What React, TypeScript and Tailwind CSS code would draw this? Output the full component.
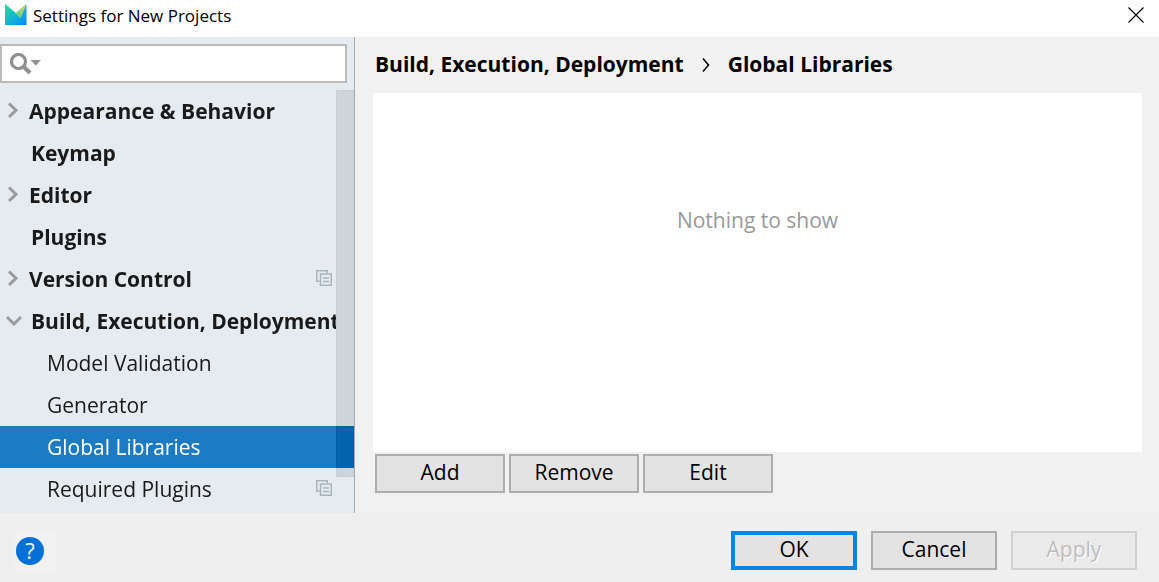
import { useState } from 'react'
import clsx from 'clsx'

interface TreeItem {
  label: string
  level: 0 | 1
  state?: 'open' | 'closed'
  perProject?: boolean
}

const ITEMS: TreeItem[] = [
  { label: 'Appearance & Behavior', level: 0, state: 'closed' },
  { label: 'Keymap', level: 0 },
  { label: 'Editor', level: 0, state: 'closed' },
  { label: 'Plugins', level: 0 },
  { label: 'Version Control', level: 0, state: 'closed', perProject: true },
  { label: 'Build, Execution, Deployment', level: 0, state: 'open' },
  { label: 'Model Validation', level: 1 },
  { label: 'Generator', level: 1 },
  { label: 'Global Libraries', level: 1 },
  { label: 'Required Plugins', level: 1, perProject: true },
]

function AppLogo() {
  return (
    <svg width="22" height="21" viewBox="0 0 22 21" aria-hidden="true">
      <defs>
        <linearGradient id="logo-base" x1="0" y1="0" x2="1" y2="1">
          <stop offset="0" stopColor="#1fe08c" />
          <stop offset="0.5" stopColor="#12b8d0" />
          <stop offset="1" stopColor="#0a84ff" />
        </linearGradient>
        <linearGradient id="logo-fold" x1="1" y1="0" x2="0.3" y2="1">
          <stop offset="0" stopColor="#f7d548" />
          <stop offset="1" stopColor="#5fd08c" />
        </linearGradient>
      </defs>
      <path d="M0 0 L11 9 L21.500 0 V21 H0 Z" fill="url(#logo-base)" />
      <path d="M21.500 0 L10.500 9.500 L15.500 14.500 Z" fill="url(#logo-fold)" />
    </svg>
  )
}

function Chevron({ state }: { state: 'open' | 'closed' }) {
  return (
    <svg width="18" height="18" viewBox="0 0 18 18" fill="none" stroke="#999b9d" strokeWidth="3" aria-hidden="true">
      {state === 'open' ? <path d="M3 5 L10 12 L17 5" /> : <path d="M5 1.500 L12 8.250 L5 15" />}
    </svg>
  )
}

function ProjectIcon() {
  return (
    <svg width="16" height="18" viewBox="0 0 16 18" fill="none" stroke="#a9b5bd" strokeWidth="1.500" aria-hidden="true">
      <path d="M3.500 11.250 H0.750 V0.750 H11.250 V3" />
      <rect x="4.500" y="4" width="10.750" height="11.250" />
      <path d="M7 8 H13 M7 11.500 H13" />
    </svg>
  )
}

function SearchBox() {
  return (
    <div className="mr-[7px] flex h-[39px] items-center border-2 border-[#b9bbbd] bg-white pl-2">
      <label htmlFor="settings-search" className="shrink-0">
        <svg width="32" height="22" viewBox="0 0 32 22" fill="none" role="img" aria-label="Search settings">
          <circle cx="8.500" cy="8.500" r="7" stroke="#8f9091" strokeWidth="3.200" />
          <path d="M13.500 13.500 L20 20" stroke="#8f9091" strokeWidth="4" />
          <path d="M20.500 7 H31 L25.750 12.500 Z" fill="#8f9091" />
        </svg>
      </label>
      <input id="settings-search" type="text" className="min-w-0 flex-1 px-1 text-[21px] outline-none" />
    </div>
  )
}

function PushButton({ label, className, disabled }: { label: string; className: string; disabled?: boolean }) {
  return (
    <button
      type="button"
      disabled={disabled}
      className={clsx('flex h-[39px] items-center justify-center pb-1 text-[21px] leading-7', className)}
    >
      {label}
    </button>
  )
}

export default function App() {
  const [selected, setSelected] = useState('Global Libraries')

  return (
    <div className="flex min-h-screen flex-col bg-[#efefef] font-['Open_Sans','Noto_Sans',sans-serif] text-black">
      <header className="flex h-[37px] items-center justify-between bg-white pr-[15px] pb-2 pl-[5px]">
        <div className="flex items-center gap-[6px]">
          <AppLogo />
          <h1 className="pt-[2px] text-[17px] leading-6">Settings for New Projects</h1>
        </div>
        <button type="button" aria-label="Close">
          <svg width="16" height="16" viewBox="0 0 16 16" stroke="#000" strokeWidth="1.200" aria-hidden="true">
            <path d="M0.500 0.500 L15.500 15.500 M15.500 0.500 L0.500 15.500" />
          </svg>
        </button>
      </header>

      <div className="flex flex-1">
        <aside className="w-[355px] shrink-0 border-r border-[#a8aaac] bg-[#e6ebef] pt-[7px]">
          <SearchBox />
          <nav className="relative isolate mt-[7px] bg-[#e6ebef] pb-[3px]">
            <ul>
              {ITEMS.map((item) => (
                <li key={item.label}>
                  <button
                    type="button"
                    onClick={() => setSelected(item.label)}
                    className={clsx(
                      'flex h-[42px] w-full items-center text-left text-[21px]',
                      item.level === 0 ? 'pl-1 font-bold' : 'pl-[47px]',
                      item.perProject ? 'pr-[22px]' : 'pr-[18px]',
                      item.label === selected ? 'bg-[#1b7bc3] text-white' : 'text-[#1a1a1a]',
                    )}
                  >
                    {item.level === 0 && (
                      <span className={clsx('flex shrink-0', item.state === 'closed' ? 'w-[25px]' : 'w-[27px]')}>
                        {item.state && <Chevron state={item.state} />}
                      </span>
                    )}
                    <span className="min-w-0 flex-1 overflow-hidden pt-[2px] whitespace-nowrap">{item.label}</span>
                    {item.perProject && <ProjectIcon />}
                  </button>
                </li>
              ))}
            </ul>
            {/* scroll thumb, darkens whatever row is below it */}
            <div className="pointer-events-none absolute top-0 right-0 bottom-9 w-[18px] border border-[#1c1c1c] bg-[#171717] mix-blend-difference" />
          </nav>
        </aside>

        <main className="flex min-w-0 flex-1 flex-col bg-[#f1f1f1] pr-[17px] pb-5 pl-[18px]">
          <h2 className="flex h-14 items-center px-[2px] text-[21px] font-bold">
            <span>Build, Execution, Deployment</span>
            <svg width="8" height="16" viewBox="0 0 8 16" fill="none" stroke="#000" strokeWidth="1.500" className="mx-[18px]" aria-hidden="true">
              <path d="M1 1.500 L6.500 8 L1 14.500" />
            </svg>
            <span>Global Libraries</span>
          </h2>
          <section className="flex-1 bg-white pt-28 text-center text-[21px] leading-[30px] text-[#999999]">
            Nothing to show
          </section>
          <div className="mt-[2px] flex gap-1 px-[2px]">
            {['Add', 'Remove', 'Edit'].map((label) => (
              <PushButton key={label} label={label} className="w-[130px] border-2 border-[#adadad] bg-[#e3e3e3]" />
            ))}
          </div>
        </main>
      </div>

      <footer className="flex h-[69px] items-center justify-between pt-[6px] pr-[22px] pl-[14px]">
        <button type="button" aria-label="Help" className="flex size-[42px] items-center bg-[#f1f1f1] pl-[2px]">
          <span className="flex size-7 items-center justify-center rounded-full bg-[#0270d7] text-[22px] text-white">?</span>
        </button>
        <div className="flex gap-[14px]">
          <PushButton label="OK" className="w-[126px] border-4 border-[#0a84e0] bg-[#e3e3e3]" />
          <PushButton label="Cancel" className="w-[126px] border-2 border-[#adadad] bg-[#e3e3e3]" />
          <PushButton
            label="Apply"
            disabled
            className="w-[126px] border-2 border-[#d0d0d0] bg-[#eaeaea] text-[#bdbdbd] text-shadow-[1px_1px_0_#ffffff]"
          />
        </div>
      </footer>
    </div>
  )
}
